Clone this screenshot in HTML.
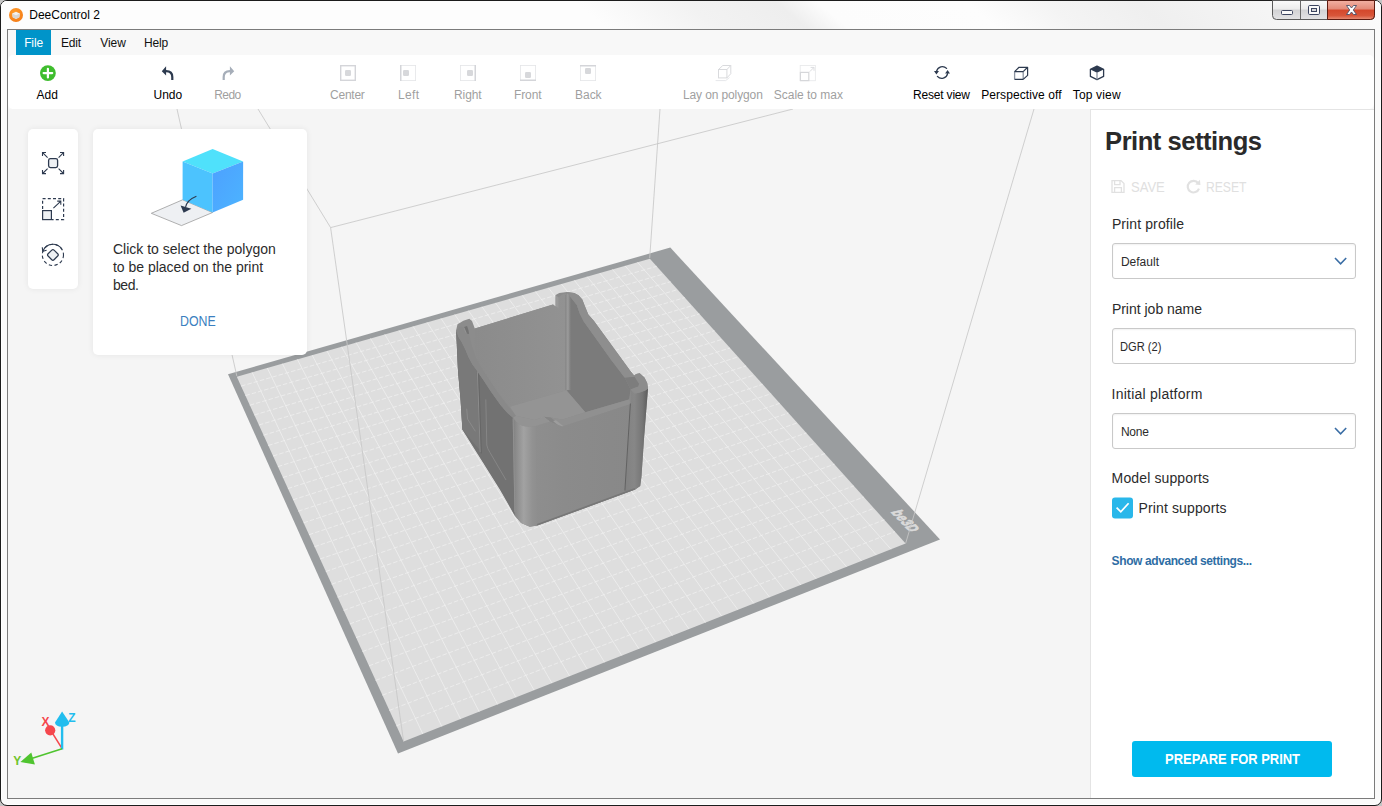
<!DOCTYPE html>
<html><head><meta charset="utf-8"><title>DeeControl 2</title><style>
html,body{margin:0;padding:0}
body{width:1382px;height:806px;overflow:hidden;background:#c4c4c4;font-family:"Liberation Sans",sans-serif;position:relative}
.abs{position:absolute}
.t{position:absolute;white-space:pre;line-height:1}
#win{position:absolute;left:0;top:0;width:1380px;height:804px;border:1px solid #1c1c1c;border-radius:7px;background:#fafafa;box-shadow:inset 0 0 0 1px #fff;overflow:hidden}
#title{position:absolute;left:1px;top:1px;width:1380px;height:28px;border-radius:6px 6px 0 0;overflow:hidden;background:#fbfbfb}
#title i{position:absolute;left:-60px;top:0;width:1500px;height:28px;transform:skewX(50deg);background:linear-gradient(90deg,#fdfdfd 0,#fdfdfd 650px,#f2f2f2 760px,#eeeeee 850px,#fcfcfc 892px,#fdfdfd 1040px,#f4f4f4 1120px,#efefef 1210px,#f5f5f5 1330px,#fbfbfb 1440px)}
#client{position:absolute;left:7px;top:29px;width:1366px;height:768px;border:1px solid #7b7b7b;background:#f8f8f8}
#filebtn{position:absolute;left:16px;top:30px;width:35px;height:25px;background:#0094c9}
#toolbar{position:absolute;left:8px;top:55px;width:1366px;height:54px;background:#fff;border-radius:5px}
#view{position:absolute;left:8px;top:109px;width:1082px;height:689px;background:#f5f5f5}
#panel{position:absolute;left:1090px;top:109px;width:283px;height:688px;background:#fff;border-left:1px solid #e4e4e4;border-top:1px solid #e4e4e4}
.card{position:absolute;background:#fff;border-radius:5px;box-shadow:0 0 6px rgba(0,0,0,0.07)}
.inp{position:absolute;left:1112px;width:242px;height:34px;border:1px solid #c9c9c9;border-radius:3px;background:#fff;box-shadow:inset 0 1px 2px rgba(0,0,0,0.06)}
#btn{position:absolute;left:1132px;top:741px;width:200px;height:36px;background:#00baee;border-radius:3px}
</style></head>
<body>
<div id="win"></div>
<div id="title"><i></i></div>
<div id="client"></div>
<div id="filebtn"></div>
<div id="toolbar"></div>
<div id="view"></div>
<svg class="abs" style="left:0;top:0" width="1382" height="806" viewBox="0 0 1382 806">
<defs><clipPath id="vp"><rect x="8" y="109" width="1082" height="689"/></clipPath>
<linearGradient id="gFL" x1="0" x2="1" y1="0" y2="0"><stop offset="0" stop-color="#7f7f7f"/><stop offset="0.12" stop-color="#8a8a8a"/><stop offset="0.45" stop-color="#a2a2a2"/><stop offset="0.8" stop-color="#929292"/><stop offset="1" stop-color="#8e8e8e"/></linearGradient>
<linearGradient id="gFR" x1="0" x2="1" y1="0" y2="0"><stop offset="0" stop-color="#818181"/><stop offset="0.4" stop-color="#878787"/><stop offset="0.75" stop-color="#767676"/><stop offset="1" stop-color="#5c5c5c"/></linearGradient>
<linearGradient id="gIC" x1="0" x2="1" y1="0" y2="0"><stop offset="0" stop-color="#858585"/><stop offset="0.5" stop-color="#9c9c9c"/><stop offset="1" stop-color="#7c7c7c"/></linearGradient>
<linearGradient id="gBW" x1="0" x2="1" y1="0" y2="0"><stop offset="0" stop-color="#8b8b8b"/><stop offset="1" stop-color="#929292"/></linearGradient>
<linearGradient id="gFF" x1="0" x2="1" y1="0" y2="0"><stop offset="0" stop-color="#8e8e8e"/><stop offset="0.3" stop-color="#8b8b8b"/><stop offset="1" stop-color="#888888"/></linearGradient>

</defs>
<g clip-path="url(#vp)">
<polygon points="228.0,374.2 670.3,247.6 940.0,539.4 398.0,753.5" fill="#9a9d9f"/>
<polygon points="236.8,376.7 649.9,258.8 905.6,543.5 403.6,741.6" fill="#dedede"/>
<path d="M252.1 372.3L422.8 734.0M267.3 368.0L441.8 726.5M282.4 363.7L460.6 719.1M297.4 359.4L479.2 711.7M312.2 355.2L497.7 704.5M327.0 351.0L515.9 697.3M341.6 346.8L534.0 690.1M356.1 342.6L551.9 683.1M370.5 338.5L569.6 676.1M384.8 334.4L587.2 669.1M399.0 330.4L604.6 662.3M413.1 326.4L621.8 655.5M427.1 322.4L638.9 648.8M441.0 318.4L655.7 642.1M454.8 314.5L672.5 635.5M468.4 310.6L689.0 629.0M482.0 306.7L705.5 622.5M495.5 302.9L721.7 616.1M508.9 299.0L737.8 609.7M522.2 295.3L753.8 603.4M535.4 291.5L769.6 597.2M548.4 287.8L785.3 591.0M561.4 284.0L800.8 584.9M574.4 280.4L816.2 578.8M587.2 276.7L831.4 572.8M599.9 273.1L846.5 566.8M612.5 269.5L861.5 560.9M625.1 265.9L876.3 555.1M637.5 262.3L891.0 549.3" stroke="#f1f1f1" stroke-width="0.8" fill="none" opacity="0.9"/>
<path d="M241.1 386.1L656.7 266.3M245.4 395.6L663.5 274.0M249.8 405.2L670.5 281.7M254.3 415.0L677.6 289.6M258.9 425.0L684.7 297.6M263.5 435.2L692.0 305.7M268.2 445.5L699.4 313.9M273.0 456.0L706.9 322.2M277.9 466.6L714.5 330.7M282.9 477.5L722.2 339.3M287.9 488.5L730.0 348.0M293.1 499.8L738.0 356.9M298.3 511.2L746.1 365.9M303.6 522.8L754.3 375.0M309.0 534.7L762.6 384.3M314.5 546.7L771.1 393.7M320.1 559.0L779.7 403.3M325.8 571.5L788.4 413.0M331.7 584.2L797.3 422.9M337.6 597.2L806.3 433.0M343.6 610.4L815.5 443.2M349.8 623.9L824.9 453.6M356.1 637.6L834.4 464.2M362.4 651.6L844.0 474.9M369.0 665.8L853.8 485.9M375.6 680.4L863.8 497.0M382.4 695.2L874.0 508.3M389.3 710.4L884.4 519.8M396.4 725.8L894.9 531.6" stroke="#f1f1f1" stroke-width="0.8" fill="none" stroke-dasharray="4.5 2" opacity="0.9"/>
<text x="0" y="0" transform="translate(890.5,512) rotate(46) skewX(-30) scale(0.92,1.12)" font-family="'Liberation Sans',sans-serif" font-weight="700" font-size="12" fill="#dadada" stroke="#dadada" stroke-width="0.7" letter-spacing="0.4">be3D</text>
<path d="M236.8 376L177 109M330.6 227.6L258 109M330.6 227.6L793 109M330.6 227.6L403.6 741.6M649.7 258L660 109M905.6 543.5L1034 109" stroke="#c8c8c8" stroke-width="0.85" fill="none"/>
<polygon points="456.3,329.5 457.5,324.3 463.4,320.7 469.3,318.8 472.0,321.0 474.8,328.4 553.0,304.6 555.6,306.5 555.6,295.0 559.3,293.1 566.8,291.9 574.2,293.0 578.5,295.3 582.3,299.6 585.0,306.4 588.3,314.4 594.0,321.0 631.0,371.7 634.2,375.4 636.2,374.0 639.7,373.3 644.4,377.4 647.2,382.9 648.0,388.5 643.9,440.0 641.4,477.2 640.2,485.9 635.2,489.6 537.2,525.6 529.8,526.8 521.1,523.1 514.9,515.7 500.0,489.6 462.4,429.5 460.6,400.0 458.0,370.8" fill="#8c8c8c"/>
<polygon points="474.8,328.4 553.0,304.6 555.6,306.5 558.6,308.3 558.6,297.5 562.0,294.5 566.0,293.5 566.0,390.3 509.9,406.7 494.0,392.8 478.0,368.0 474.5,345.0" fill="url(#gBW)"/>
<polygon points="555.6,294.9 558.6,297.5 558.6,308.3 555.6,306.5" fill="#9a9a9a"/>
<polygon points="570.5,297.1 571.4,298.2 576.8,305.0 579.6,313.2 583.7,321.4 597.3,340.5 611.0,359.7 624.6,377.4 630.6,389.4 629.0,399.5 585.3,412.2 566.4,390.3 570.5,390.0" fill="#7b7b7b"/>
<polygon points="624.6,377.4 634.7,376.8 639.1,383.8 638.4,386.4 630.6,389.4" fill="#7d7d7d"/>
<polygon points="565.3,295.0 568.0,293.2 570.5,297.1 570.5,389.5 566.4,390.3 565.3,389.9" fill="url(#gIC)"/>
<polygon points="509.9,406.7 566.4,390.3 585.3,412.2 562.5,419.5 550.5,417.6 543.6,416.7 534.7,420.0 515.8,415.7" fill="#949494"/>
<polygon points="585.3,412.2 629.0,399.5 630.6,403.9 562.5,426.6 550.5,417.6 562.5,419.5" fill="#909090"/>
<polygon points="543.6,416.7 550.5,417.6 562.5,426.6 556.5,426.0" fill="#858585"/>
<polygon points="540.5,417.5 543.6,416.7 549.6,421.6 547.0,422.5" fill="#9d9d9d"/>
<polygon points="553.0,421.0 556.0,420.3 563.5,426.2 560.5,427.2" fill="#9d9d9d"/>
<polygon points="534.7,426.6 549.6,421.6 562.5,426.6 630.6,403.9 625.0,490.9 635.2,489.6 537.2,525.6 534.0,525.9" fill="url(#gFF)"/>
<path d="M513.3 417.6L515.8 415.7L534.7 420L543.6 416.7L549.6 421.6L534.7 426.6Q527.7 427.6 522 425.8Q515.5 422.5 513.3 417.6Z" fill="#939393"/>
<path d="M512.7 417.6Q515.5 422.5 522 425.8Q527.7 427.6 535.5 426.4L537.2 525.6L529.8 526.8L521.1 523.1L514.9 515.7L514.4 511.1Z" fill="url(#gFL)"/>
<path d="M630.6 389.4L634.7 393.5Q644 392 648 388.5L643.9 440L641.4 477.2L640.2 485.9L635.2 489.6L625 491.2L630.6 403.9Z" fill="url(#gFR)"/>
<path d="M630.4 403.5L624.9 490.5" stroke="#5e5e5e" stroke-width="0.9" fill="none"/>
<path d="M537.2 524.8L635 488.8" stroke="#777" stroke-width="1.6" fill="none"/>
<path d="M634.2 375.4L636.2 374L639.7 373.3L644.4 377.4L647.2 382.9L648 388.5Q644 392 634.7 393.5L630.6 389.4L638.4 386.4L639.1 383.8L634.7 376.8Z" fill="#8d8d8d"/>
<polygon points="570.5,297.1 566.8,291.9 574.2,293.0 578.5,295.3 582.3,299.6 585.0,306.4 588.3,314.4 594.0,321.0 631.0,371.7 634.2,375.4 634.7,376.8 624.6,377.4 611.0,359.7 597.3,340.5 583.7,321.4 579.6,313.2 576.8,305.0 571.4,298.2" fill="#8e8e8e"/>
<polygon points="456.1,330.0 458.2,336.8 461.6,342.3 465.0,349.1 468.4,357.3 472.5,364.8 476.6,370.3 482.7,379.1 490.9,391.4 500.5,405.0 507.0,412.5 512.7,417.6 514.4,511.1 514.9,515.7 500.0,489.6 462.4,429.5 460.6,400.0 458.0,370.8" fill="#727272"/>
<polygon points="456.1,330.0 458.2,336.8 461.6,342.3 465.0,349.1 468.4,357.3 472.5,364.8 476.6,370.3 479.7,450.0 462.4,429.5 460.6,400.0 458.0,370.8" fill="#797979"/>
<path d="M477.4 371.5L480.2 452" stroke="#8c8c8c" stroke-width="1" fill="none"/>
<path d="M478.7 373.5L481.4 453.5" stroke="#656565" stroke-width="0.9" fill="none"/>
<path d="M485.8 399.4L486.8 445Q487.5 449 490 452.5L506 480" stroke="#868686" stroke-width="1" fill="none"/>
<path d="M466.7 408.7L467.6 419.1L475.4 431.3" stroke="#8a8a8a" stroke-width="1" fill="none"/>
<path d="M513.2 418.5L514.9 512" stroke="#909090" stroke-width="1" fill="none"/>
<polygon points="456.1,330.0 458.2,336.8 461.6,342.3 465.0,349.1 468.4,357.3 472.5,364.8 476.6,370.3 482.7,379.1 490.9,391.4 500.5,405.0 507.0,412.5 512.7,417.6 515.8,415.7 508.0,406.0 497.5,392.0 489.5,380.0 481.5,368.0 476.0,358.0 472.0,346.0 469.5,336.0 467.0,326.0 463.6,327.3 459.5,326.5 458.3,329.0" fill="#898989"/>
<polygon points="463.6,327.3 467.0,325.9 468.4,330.0 469.1,334.1 466.4,333.4" fill="#727272"/>
<path d="M463.8 327.3L466.4 333.4" stroke="#9a9a9a" stroke-width="0.8"/>
<g>
<path d="M62.1 748.7L50.7 730.3" stroke="#f5474d" stroke-width="1.6"/>
<circle cx="50.2" cy="730.3" r="5.1" fill="#f5474d"/>
<path d="M62.1 749.5L62.1 722" stroke="#22bdee" stroke-width="2.4"/>
<path d="M62.1 711.4L55 722.5Q55.2 726.6 62.1 726.8Q69 726.6 69.4 722.5Z" fill="#22bdee"/>
<path d="M62.1 748.7L30 759" stroke="#4fc42f" stroke-width="1.6"/>
<path d="M20.4 762.1L31.3 752.4L34.9 764.6Z" fill="#4fc42f"/>
</g>
</g></svg>
<div id="panel"></div>
<div class="card" style="left:28px;top:129px;width:50px;height:160px"></div>
<div class="card" style="left:93px;top:129px;width:214px;height:226px"></div>
<div class="inp" style="top:243px"></div>
<div class="inp" style="top:328px"></div>
<div class="inp" style="top:413px"></div>
<div id="btn"></div>
<svg class="abs" style="left:0;top:0" width="1382" height="806" viewBox="0 0 1382 806">
<defs><radialGradient id="gApp" cx="0.4" cy="0.3" r="0.8"><stop offset="0" stop-color="#ff9c2a"/><stop offset="1" stop-color="#f47a16"/></radialGradient>
<linearGradient id="gClose" x1="0" x2="0" y1="0" y2="1"><stop offset="0" stop-color="#f2b1a3"/><stop offset="0.45" stop-color="#e38a78"/><stop offset="0.5" stop-color="#d4472b"/><stop offset="0.8" stop-color="#d8563a"/><stop offset="1" stop-color="#e9927b"/></linearGradient>
<linearGradient id="gBtn" x1="0" x2="0" y1="0" y2="1"><stop offset="0" stop-color="#fbfbfb"/><stop offset="0.45" stop-color="#ececec"/><stop offset="0.5" stop-color="#d2d2d4"/><stop offset="1" stop-color="#e3e3e5"/></linearGradient>
<linearGradient id="gCubeR" x1="0" x2="1" y1="0" y2="1"><stop offset="0" stop-color="#4da0ff"/><stop offset="1" stop-color="#4cb4ff"/></linearGradient>
</defs>
<circle cx="16" cy="15" r="7" fill="url(#gApp)"/>
<path d="M12.2 13.6L16 11.8L19.8 13.6L19.3 17.2L16 18.9L12.7 17.2Z" fill="#f4f1ee"/><path d="M12.2 13.6L16 15.3L19.8 13.6L19.3 17.2L16 18.9L12.7 17.2Z" fill="#d9d6d3"/>
<path d="M1272.5 0.5H1374.5V15.5Q1374.5 19.5 1370.5 19.5H1276.5Q1272.5 19.5 1272.5 15.5Z" fill="url(#gBtn)" stroke="#5a5a5a" stroke-width="1"/>
<path d="M1327.5 0.5H1374.5V15.5Q1374.5 19.5 1370.5 19.5H1327.5Z" fill="url(#gClose)" stroke="#5e1b10" stroke-width="1"/>
<path d="M1300.5 1V19" stroke="#6a6a6a" stroke-width="1"/>
<rect x="1281.5" y="10.5" width="11" height="4" rx="1" fill="#fafafa" stroke="#3c4560" stroke-width="1"/>
<rect x="1308.5" y="5.5" width="11" height="9" rx="1.2" fill="#fafafa" stroke="#3c4560" stroke-width="1"/><rect x="1311.5" y="8.5" width="5" height="3" fill="#d8d8da" stroke="#3c4560" stroke-width="1"/>
<path d="M1346.5 5.5L1349.5 5.5L1351.5 8L1353.5 5.5L1356.5 5.5L1353.3 10L1356.5 14.5L1353.5 14.5L1351.5 12L1349.5 14.5L1346.5 14.5L1349.7 10Z" fill="#fff" stroke="#4a4f68" stroke-width="0.9" stroke-linejoin="round"/>
<circle cx="47.9" cy="73.1" r="7.9" fill="#3fbd2e"/><path d="M43.6 73.1H52.2M47.9 68.8V77.4" stroke="#fff" stroke-width="2.2" stroke-linecap="round"/>
<path d="M0 5.2L4.3 0.2L4.3 4.1Q11.6 4.2 11.6 11L11.6 14L9.4 14L9.4 11Q9.4 6.4 4.3 6.3L4.3 9.6Z" transform="translate(161.8,66)" fill="#2d3a4f"/>
<path d="M0 5.2L4.3 0.2L4.3 4.1Q11.6 4.2 11.6 11L11.6 14L9.4 14L9.4 11Q9.4 6.4 4.3 6.3L4.3 9.6Z" transform="translate(234.2,66) scale(-1,1)" fill="#a6aeb9"/>
<rect x="340.7" y="65.7" width="14.6" height="14.6" fill="none" stroke="#d4d5d9" stroke-width="1.4"/><rect x="345" y="70" width="6" height="6" rx="1.2" fill="#d7d8db"/>
<rect x="400.4" y="65.4" width="15.2" height="15.2" fill="none" stroke="#e4e5e8" stroke-width="0.8"/><rect x="400" y="65" width="1.5" height="16" fill="#d4d5d9"/><rect x="403" y="70" width="6" height="6" rx="1.2" fill="#d7d8db"/>
<rect x="460.4" y="65.4" width="15.2" height="15.2" fill="none" stroke="#e4e5e8" stroke-width="0.8"/><rect x="474.5" y="65" width="1.5" height="16" fill="#d4d5d9"/><rect x="467" y="70" width="6" height="6" rx="1.2" fill="#d7d8db"/>
<rect x="520.4" y="65.4" width="15.2" height="15.2" fill="none" stroke="#e4e5e8" stroke-width="0.8"/><rect x="520" y="79.5" width="16" height="1.5" fill="#d4d5d9"/><rect x="525" y="72" width="6" height="6" rx="1.2" fill="#d7d8db"/>
<rect x="580.4" y="65.4" width="15.2" height="15.2" fill="none" stroke="#e4e5e8" stroke-width="0.8"/><rect x="580" y="65" width="16" height="1.5" fill="#d4d5d9"/><rect x="585" y="68" width="6" height="6" rx="1.2" fill="#d7d8db"/>
<g fill="none" stroke="#d9dadd" stroke-width="1"><rect x="718.5" y="69.5" width="8.4" height="8.4"/><path d="M718.5 69.5L722.8 65.5H730.8L726.9 69.5M730.8 65.5V73.7L726.9 77.9"/><path d="M715.6 80.6H725.7L729.5 77.5" stroke="#e6e7ea"/></g>
<g fill="none"><rect x="800.2" y="65.5" width="15.2" height="15.2" stroke="#e9eaec" stroke-width="0.9"/><rect x="800.4" y="72.4" width="8.4" height="8.2" stroke="#d6d7da" stroke-width="1.2"/><path d="M809.8 71.6L813.8 67.6M810.6 67.4H814V70.8" stroke="#dcdde0" stroke-width="1"/></g>
<g fill="none" stroke="#2d3a4f" stroke-width="1.3" stroke-linecap="round"><path d="M936.6 71.2A5.9 5.9 0 0 1 946.6 68.4"/><path d="M947.6 73.6A5.9 5.9 0 0 1 937.4 76.4"/></g>
<path d="M934 71L939 71L936.4 74.4Z" fill="#2d3a4f"/><path d="M945.1 73.4L950 73.4L947.6 70Z" fill="#2d3a4f"/>
<g fill="none" stroke-linejoin="round"><path d="M1014.6 71.6V79.4M1023.2 71.6V79.4" stroke="#8c94a2" stroke-width="1.3"/><path d="M1014.6 71.6H1023.2M1014.6 79.4H1023.2" stroke="#2d3a4f" stroke-width="1.3"/><path d="M1014.6 71.6L1019 67.3H1027.6L1023.2 71.6M1027.6 67.3V75.4L1023.2 79.4" stroke="#2d3a4f" stroke-width="1.2"/></g>
<path d="M1097 66.2L1103.6 69.4L1097 72.7L1090.4 69.4Z" fill="#2d3a4f"/><path d="M1097 66.2L1103.6 69.4V76.4L1097 79.6L1090.4 76.4V69.4Z" fill="none" stroke="#2d3a4f" stroke-width="1.3" stroke-linejoin="round"/><path d="M1097 72.7V79.4" stroke="#8c94a2" stroke-width="1.3"/>
</svg>
<svg class="abs" style="left:0;top:0" width="1382" height="806" viewBox="0 0 1382 806">
<rect x="48.6" y="158.6" width="9" height="9" rx="1.8" fill="#eef1f4" stroke="#2d3a4f" stroke-width="1.3"/>
<g fill="none" stroke="#2d3a4f" stroke-width="1.1"><path d="M47.6 157.6L42.6 152.6M42.5 156V152.5H46"/><path d="M58.6 157.6L63.5 152.6M60 152.5H63.6V156"/><path d="M47.6 168.6L42.6 173.5M42.5 170V173.6H46"/><path d="M58.6 168.6L63.5 173.5M60 173.6H63.6V170"/></g>
<path d="M42.6 209V198.6H63.6V219.6H52" fill="none" stroke="#2d3a4f" stroke-width="1.2" stroke-dasharray="3 2.2"/>
<rect x="42.6" y="210.6" width="8.8" height="9" fill="#eef1f4" stroke="#2d3a4f" stroke-width="1.2"/>
<path d="M53.4 208.2L60.6 201.3M57.2 201.1H60.8V204.7" fill="none" stroke="#2d3a4f" stroke-width="1.1"/>
<circle cx="52.9" cy="254.9" r="10.6" fill="none" stroke="#2d3a4f" stroke-width="1.1" stroke-dasharray="3.3 2.5"/>
<path d="M43.2 250.5A10.6 10.6 0 0 1 62 249.5" fill="none" stroke="#2d3a4f" stroke-width="1.1"/>
<path d="M42.3 247.2L42.7 251.2L46.6 250.3" fill="none" stroke="#2d3a4f" stroke-width="1.1"/>
<rect x="-4.2" y="-4.2" width="8.4" height="8.4" rx="1.6" transform="translate(52.9,254.9) rotate(45)" fill="#eef1f4" stroke="#2d3a4f" stroke-width="1.2"/>
<polygon points="151.3,213.3 182.6,199.8 212.6,212.5 181.5,225.6" fill="#eef0f3" stroke="#8f8f8f" stroke-width="0.7"/>
<polygon points="212.6,148.9 243.1,161.6 212.6,173.5 182.6,161.6" fill="#4fe1fb"/>
<polygon points="182.6,161.6 212.6,173.5 212.6,212.5 182.6,199.8" fill="#4cc3fe"/>
<polygon points="212.6,173.5 243.1,161.6 243.1,199.8 212.6,212.5" fill="url(#gCubeR)"/>
<path d="M196.4 196.2Q187 200 185.6 207" fill="none" stroke="#2d3a4f" stroke-width="1.2"/><path d="M180.6 205.4L191.4 208.8L183.6 212.8Z" fill="#2d3a4f"/>
<g fill="none" stroke="#e1e1e1" stroke-width="1.3"><path d="M1112 180.6H1121L1124 183.6V192.4H1112Z"/><path d="M1114.6 180.8V184.6H1120V180.8M1114.6 192.2V187.6H1121.4V192.2"/></g>
<path d="M1198.2 183.2A5.8 5.8 0 1 0 1199 188.6" fill="none" stroke="#e1e1e1" stroke-width="2.1"/><path d="M1195.2 184.6L1200.4 185L1200 179.8Z" fill="#e1e1e1"/>
<path d="M1335 258L1340.6 263.8L1346.2 258" fill="none" stroke="#3b6ea5" stroke-width="1.6"/>
<path d="M1335 428L1340.6 433.8L1346.2 428" fill="none" stroke="#3b6ea5" stroke-width="1.6"/>
<rect x="1112" y="497.4" width="21" height="21" rx="3" fill="#29b7ea"/><path d="M1116.6 507.6L1120.8 511.8L1128.6 503.2" fill="none" stroke="#fff" stroke-width="1.7"/>
</svg>
<span class="t" style="left:29.3px;top:9.0px;font-size:12px;font-weight:400;color:#000;letter-spacing:-0.01px">DeeControl 2</span><span class="t" style="left:24.2px;top:37.0px;font-size:12px;font-weight:400;color:#fff;letter-spacing:-0.15px">File</span><span class="t" style="left:61.1px;top:37.0px;font-size:12px;font-weight:400;color:#111;letter-spacing:-0.26px">Edit</span><span class="t" style="left:100.2px;top:37.0px;font-size:12px;font-weight:400;color:#111;letter-spacing:-0.03px">View</span><span class="t" style="left:143.9px;top:37.0px;font-size:12px;font-weight:400;color:#111;letter-spacing:-0.10px">Help</span><span class="t" style="left:36.6px;top:89.0px;font-size:12px;font-weight:400;color:#000;letter-spacing:0.02px">Add</span><span class="t" style="left:153.5px;top:89.0px;font-size:12px;font-weight:400;color:#000;letter-spacing:-0.03px">Undo</span><span class="t" style="left:214.3px;top:89.0px;font-size:12px;font-weight:400;color:#9f9f9f;letter-spacing:-0.63px">Redo</span><span class="t" style="left:330.0px;top:89.0px;font-size:12px;font-weight:400;color:#9f9f9f;letter-spacing:-0.23px">Center</span><span class="t" style="left:398.1px;top:89.0px;font-size:12px;font-weight:400;color:#9f9f9f;letter-spacing:0.29px">Left</span><span class="t" style="left:454.1px;top:89.0px;font-size:12px;font-weight:400;color:#9f9f9f;letter-spacing:-0.15px">Right</span><span class="t" style="left:513.9px;top:89.0px;font-size:12px;font-weight:400;color:#9f9f9f;letter-spacing:-0.05px">Front</span><span class="t" style="left:575.1px;top:89.0px;font-size:12px;font-weight:400;color:#9f9f9f;letter-spacing:-0.06px">Back</span><span class="t" style="left:682.9px;top:89.0px;font-size:12px;font-weight:400;color:#9f9f9f;letter-spacing:-0.11px">Lay on polygon</span><span class="t" style="left:773.8px;top:89.0px;font-size:12px;font-weight:400;color:#9f9f9f;letter-spacing:-0.02px">Scale to max</span><span class="t" style="left:913.1px;top:89.0px;font-size:12px;font-weight:400;color:#000;letter-spacing:-0.20px">Reset view</span><span class="t" style="left:981.2px;top:89.0px;font-size:12px;font-weight:400;color:#000;letter-spacing:0.08px">Perspective off</span><span class="t" style="left:1072.8px;top:89.0px;font-size:12px;font-weight:400;color:#000;letter-spacing:0.16px">Top view</span><span class="t" style="left:112.9px;top:242.0px;font-size:14px;font-weight:400;color:#2b2b2b;letter-spacing:0.01px">Click to select the polygon</span><span class="t" style="left:112.9px;top:260.0px;font-size:14px;font-weight:400;color:#2b2b2b;letter-spacing:0.00px">to be placed on the print</span><span class="t" style="left:112.9px;top:278.0px;font-size:14px;font-weight:400;color:#2b2b2b;letter-spacing:-0.38px">bed.</span><span class="t" style="left:179.6px;top:314.0px;font-size:14px;font-weight:400;color:#3b7fc0;transform-origin:0 0;transform:scaleX(0.883)">DONE</span><span class="t" style="left:1105.1px;top:129.0px;font-size:25.6px;font-weight:700;color:#2a2a2a;letter-spacing:-0.51px">Print settings</span><span class="t" style="left:1130.6px;top:180.0px;font-size:14px;font-weight:400;color:#e0e0e0;transform-origin:0 0;transform:scaleX(0.931)">SAVE</span><span class="t" style="left:1206.3px;top:180.0px;font-size:14px;font-weight:400;color:#e0e0e0;transform-origin:0 0;transform:scaleX(0.867)">RESET</span><span class="t" style="left:1111.9px;top:217.0px;font-size:14px;font-weight:400;color:#2b2b2b;letter-spacing:0.11px">Print profile</span><span class="t" style="left:1120.9px;top:256.0px;font-size:12px;font-weight:400;color:#2b2b2b;letter-spacing:0.01px">Default</span><span class="t" style="left:1111.9px;top:302.0px;font-size:14px;font-weight:400;color:#2b2b2b;letter-spacing:-0.01px">Print job name</span><span class="t" style="left:1119.6px;top:341.0px;font-size:12px;font-weight:400;color:#2b2b2b;transform-origin:0 0;transform:scaleX(0.927)">DGR (2)</span><span class="t" style="left:1111.6px;top:387.0px;font-size:14px;font-weight:400;color:#2b2b2b;letter-spacing:0.24px">Initial platform</span><span class="t" style="left:1120.9px;top:426.0px;font-size:12px;font-weight:400;color:#2b2b2b;letter-spacing:-0.20px">None</span><span class="t" style="left:1111.6px;top:471.0px;font-size:14px;font-weight:400;color:#2b2b2b;letter-spacing:0.13px">Model supports</span><span class="t" style="left:1138.6px;top:501.0px;font-size:14px;font-weight:400;color:#2b2b2b;letter-spacing:0.12px">Print supports</span><span class="t" style="left:1111.6px;top:555.0px;font-size:12px;font-weight:700;color:#2e6da4;letter-spacing:-0.40px">Show advanced settings...</span><span class="t" style="left:1164.8px;top:752.0px;font-size:14px;font-weight:700;color:#fff;transform-origin:0 0;transform:scaleX(0.925)">PREPARE FOR PRINT</span><span class="t" style="left:41.4px;top:716.0px;font-size:12px;font-weight:700;color:#f5474d;letter-spacing:-0.22px">X</span><span class="t" style="left:13.2px;top:755.0px;font-size:12px;font-weight:700;color:#6fc42b;letter-spacing:-0.22px">Y</span><span class="t" style="left:68.2px;top:712.0px;font-size:12px;font-weight:700;color:#22bdee;letter-spacing:-0.04px">Z</span>
</body></html>
